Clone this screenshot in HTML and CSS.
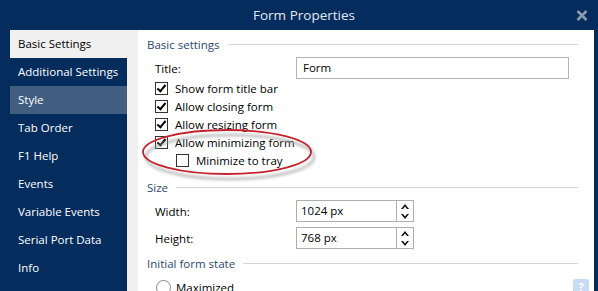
FILE: index.html
```html
<!DOCTYPE html>
<html lang="en">

<head>
  <meta charset="UTF-8">
  <title>Form Properties</title>
  <link rel="stylesheet" href="styles.css">
</head>

<body>
  <div class="window">
    <div class="titlebar">
      <span class="title">Form Properties</span>
      <svg class="close" width="12" height="11" viewBox="0 0 12 11">
        <path d="M1.5 1 L10.5 10 M10.5 1 L1.5 10" stroke="#8b9bb0" stroke-width="2.6" />
      </svg>
    </div>

    <div class="main">
      <nav class="sidebar">
        <div class="item selected">Basic Settings</div>
        <div class="item">Additional Settings</div>
        <div class="item hover">Style</div>
        <div class="item">Tab Order</div>
        <div class="item">F1 Help</div>
        <div class="item">Events</div>
        <div class="item">Variable Events</div>
        <div class="item">Serial Port Data</div>
        <div class="item">Info</div>
      </nav>
      <div class="strip"></div>

      <div class="panel">
        <div class="group-head"><span>Basic settings</span><span class="rule"></span></div>

        <div class="field">
          <label class="field-label">Title:</label>
          <div class="textbox">Form</div>
        </div>

        <div class="check"><span class="box on"></span>Show form title bar</div>
        <div class="check"><span class="box on"></span>Allow closing form</div>
        <div class="check"><span class="box on"></span>Allow resizing form</div>
        <div class="check"><span class="box on"></span>Allow minimizing form</div>
        <div class="check sub"><span class="box"></span>Minimize to tray</div>

        <div class="group-head size-head"><span>Size</span><span class="rule"></span></div>

        <div class="field spin-row">
          <label class="field-label">Width:</label>
          <div class="spin">
            <span class="spin-value">1024 px</span>
            <span class="spin-btns">
              <svg width="8" height="5" viewBox="0 0 8 5"><path d="M0 5 L4 0 L8 5 L6 5 L4 2.5 L2 5 Z" fill="#111" /></svg>
              <svg width="8" height="5" viewBox="0 0 8 5"><path d="M0 0 L4 5 L8 0 L6 0 L4 2.5 L2 0 Z" fill="#111" /></svg>
            </span>
          </div>
        </div>
        <div class="field spin-row">
          <label class="field-label">Height:</label>
          <div class="spin">
            <span class="spin-value">768 px</span>
            <span class="spin-btns">
              <svg width="8" height="5" viewBox="0 0 8 5"><path d="M0 5 L4 0 L8 5 L6 5 L4 2.5 L2 5 Z" fill="#111" /></svg>
              <svg width="8" height="5" viewBox="0 0 8 5"><path d="M0 0 L4 5 L8 0 L6 0 L4 2.5 L2 0 Z" fill="#111" /></svg>
            </span>
          </div>
        </div>

        <div class="group-head state-head"><span>Initial form state</span><span class="rule"></span></div>
        <div class="radio-row"><span class="radio"></span>Maximized</div>

        <!-- red annotation round the minimize options -->
        <svg class="mark" width="180" height="56" viewBox="0 0 180 56">
          <defs>
            <filter id="shade" x="-10%" y="-30%" width="120%" height="160%">
              <feGaussianBlur stdDeviation="1.6" />
            </filter>
          </defs>
          <ellipse cx="88" cy="26" rx="84" ry="22" fill="none" stroke="#9a9a9a" stroke-width="2.5" opacity="0.7" filter="url(#shade)" transform="translate(3 3)" />
          <ellipse cx="88" cy="24" rx="84" ry="22" fill="none" stroke="#c4222c" stroke-width="1.8" />
        </svg>

        <div class="help">?</div>
      </div>
      <div class="edge"></div>
    </div>
  </div>
</body>

</html>
```

FILE: styles.css
```css
body {
  margin: 0;
  font-family: "Open Sans", "Noto Sans", sans-serif;
  font-size: 11.5px;
  color: #000;
}

.window {
  width: 598px;
  height: 291px;
  overflow: hidden;
  background-color: #042c5c;
  display: flex;
  flex-direction: column;
}

.titlebar {
  height: 30px;
  flex: none;
  display: flex;
  justify-content: center;
  align-items: center;
  padding-left: 10px;
  position: relative;
}

.title {
  color: #e4e9f0;
  font-size: 13.5px;
}

.close {
  position: absolute;
  right: 10px;
  top: 10px;
}

.main {
  flex: 1;
  display: flex;
  min-height: 0;
}

.sidebar {
  width: 117px;
  padding-left: 10px;
  flex: none;
}

.item {
  height: 28px;
  line-height: 28px;
  padding-left: 8px;
  color: #fff;
  white-space: nowrap;
}

.item.selected {
  background-color: #f0f0f0;
  color: #000;
}

.item.hover {
  background-color: #415d80;
}

.strip {
  width: 11px;
  flex: none;
  background-color: #f0f0f0;
}

.panel {
  width: 456px;
  flex: none;
  background-color: #fff;
  position: relative;
  padding-top: 6px;
}

.edge {
  flex: 1;
}

.group-head {
  display: flex;
  align-items: center;
  height: 16px;
  padding-left: 9px;
  padding-right: 16px;
  color: #2a4870;
}

.group-head .rule {
  flex: 1;
  height: 1px;
  margin-left: 8px;
  background-color: #d6d6d6;
}

.size-head {
  margin-top: 10px;
}

.state-head {
  margin-top: 6px;
}

.field {
  display: flex;
  align-items: center;
  height: 22px;
  margin-top: 5px;
  padding-left: 17px;
}

.field-label {
  width: 141px;
  flex: none;
}

.textbox {
  width: 265px;
  height: 20px;
  line-height: 20px;
  border: 1px solid #b4b4b4;
  padding-left: 6px;
}

.check {
  display: flex;
  align-items: center;
  height: 18px;
  padding-left: 17px;
  gap: 7px;
}

.check.sub {
  padding-left: 38px;
}

.box {
  width: 11px;
  height: 11px;
  border: 1px solid #333;
  flex: none;
  position: relative;
}

.box.on::after {
  content: "";
  position: absolute;
  left: 3px;
  top: 0px;
  width: 3px;
  height: 7px;
  border-right: 2px solid #000;
  border-bottom: 2px solid #000;
  transform: rotate(40deg);
}

.spin {
  width: 116px;
  height: 20px;
  border: 1px solid #adadad;
  display: flex;
}

.spin-value {
  flex: 1;
  line-height: 20px;
  padding-left: 4px;
}

.spin-btns {
  width: 16px;
  border-left: 1px solid #adadad;
  display: flex;
  flex-direction: column;
  align-items: center;
  justify-content: center;
  gap: 5px;
}

.radio-row {
  display: flex;
  align-items: center;
  height: 18px;
  margin-top: 7px;
  padding-left: 18px;
  gap: 5px;
}

.radio {
  width: 13px;
  height: 13px;
  border: 1px solid #8a8a8a;
  border-radius: 50%;
  flex: none;
}

.mark {
  position: absolute;
  left: 1px;
  top: 98px;
}

.help {
  position: absolute;
  right: 5px;
  top: 249px;
  width: 16px;
  height: 16px;
  border-radius: 2px;
  background-color: #c7dbf4;
  color: #fff;
  font-weight: bold;
  font-size: 11px;
  text-align: center;
  line-height: 16px;
}
```
